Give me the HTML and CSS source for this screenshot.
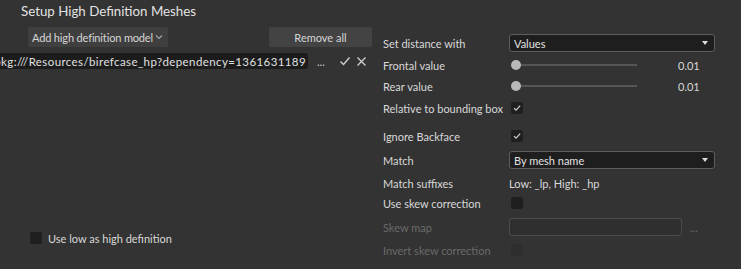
FILE: index.html
```html
<!DOCTYPE html>
<html lang="en">
<head>
    <meta charset="UTF-8">
    <meta name="viewport" content="width=device-width, initial-scale=1.0">
    <title>Setup High Definition Meshes</title>
    <link rel="stylesheet" href="styles.css">
</head>
<body>
    <div class="panel">
        <h1 class="title">Setup High Definition Meshes</h1>
        <div class="columns">
            <div class="left">
                <div class="toolbar">
                    <div class="combo">
                        <span>Add high definition model</span>
                        <svg class="chevron" width="8" height="6" viewBox="0 0 8 6"><path d="M1 1.5 L4 4.5 L7 1.5" fill="none" stroke="#a8a8a8" stroke-width="1.1"/></svg>
                    </div>
                    <button class="btn">Remove all</button>
                </div>
                <div class="path-row">
                    <div class="path"><span>pkg:///Resources/birefcase_hp?dependency=1361631189</span></div>
                    <span class="dots">...</span>
                    <svg class="icon" width="12" height="12" viewBox="0 0 12 12"><path d="M1.5 6.5 L4.5 9.5 L10.5 2.5" fill="none" stroke="#d0d0d0" stroke-width="1.4"/></svg>
                    <svg class="icon" width="11" height="11" viewBox="0 0 11 11"><path d="M1.5 1.5 L9.5 9.5 M9.5 1.5 L1.5 9.5" fill="none" stroke="#d0d0d0" stroke-width="1.3"/></svg>
                </div>
                <div class="check-line">
                    <span class="box"></span>
                    <span>Use low as high definition</span>
                </div>
            </div>

            <div class="right">
                <div class="row">
                    <span class="label">Set distance with</span>
                    <div class="select"><span>Values</span><span class="arrow"></span></div>
                </div>
                <div class="row">
                    <span class="label">Frontal value</span>
                    <div class="slider"><span class="knob"></span><span class="track"></span></div>
                    <span class="value">0.01</span>
                </div>
                <div class="row tight">
                    <span class="label">Rear value</span>
                    <div class="slider"><span class="knob"></span><span class="track"></span></div>
                    <span class="value">0.01</span>
                </div>
                <div class="row">
                    <span class="label">Relative to bounding box</span>
                    <span class="box checked"><svg width="12" height="12" viewBox="0 0 12 12"><path d="M3 6.2 L5 8.2 L9.2 3.6" fill="none" stroke="#cfcfcf" stroke-width="1.2"/></svg></span>
                </div>

                <div class="row section">
                    <span class="label">Ignore Backface</span>
                    <span class="box checked"><svg width="12" height="12" viewBox="0 0 12 12"><path d="M3 6.2 L5 8.2 L9.2 3.6" fill="none" stroke="#cfcfcf" stroke-width="1.2"/></svg></span>
                </div>
                <div class="row gap4">
                    <span class="label">Match</span>
                    <div class="select"><span>By mesh name</span><span class="arrow"></span></div>
                </div>
                <div class="row gap3">
                    <span class="label">Match suffixes</span>
                    <span class="plain">Low: _lp, High: _hp</span>
                </div>
                <div class="row gap0">
                    <span class="label">Use skew correction</span>
                    <span class="box"></span>
                </div>
                <div class="row gap4 disabled">
                    <span class="label">Skew map</span>
                    <div class="field"></div>
                    <span class="more">...</span>
                </div>
                <div class="row gap3 disabled">
                    <span class="label">Invert skew correction</span>
                    <span class="box faint"></span>
                </div>
            </div>
        </div>
    </div>
</body>
</html>
```

FILE: styles.css
```css
body {
    margin: 0;
    background: #333333;
    font-family: Lato, "Noto Sans", sans-serif;
    font-size: 11px;
    color: #d8d8d8;
    white-space: nowrap;
}
.panel {
    width: 741px;
    height: 269px;
    overflow: hidden;
}
.title {
    margin: 0;
    padding-left: 21px;
    height: 27px;
    line-height: 22px;
    font-size: 13.3px;
    font-weight: normal;
    color: #e2e2e2;
}
.columns {
    display: flex;
    gap: 11px;
}
.left {
    width: 372px;
    display: flex;
    flex-direction: column;
}
.toolbar {
    display: flex;
    justify-content: space-between;
    padding-left: 28px;
    height: 20px;
}
.combo {
    width: 140px;
    box-sizing: border-box;
    padding: 0 5px 0 4px;
    background: #3f3f3f;
    border-radius: 2px;
    display: flex;
    align-items: center;
    justify-content: space-between;
    color: #d6d6d6;
    letter-spacing: -0.15px;
}
.btn {
    width: 103px;
    height: 20px;
    border: none;
    border-radius: 2px;
    background: #434343;
    color: #d6d6d6;
    font-family: inherit;
    font-size: 11px;
    padding: 0;
}
.path-row {
    margin-top: 6px;
    height: 16px;
    display: flex;
    align-items: center;
}
.path {
    width: 308px;
    height: 16px;
    background: #1c1c1c;
    border-radius: 0 3px 3px 0;
    display: flex;
    justify-content: flex-end;
    align-items: center;
    overflow: hidden;
    color: #e0e0e0;
    font-size: 11.5px;
    letter-spacing: 0.4px;
}
.path span {
    flex-shrink: 0;
    padding-right: 2px;
}
.dots {
    margin-left: 9px;
    margin-right: 14px;
    color: #d0d0d0;
}
.icon {
    margin-right: 5px;
}
.check-line {
    margin-top: 162px;
    padding-left: 30px;
    display: flex;
    align-items: center;
    gap: 6px;
    height: 14px;
}
.box {
    width: 12px;
    height: 12px;
    background: #1f1f1f;
    border-radius: 2px;
    display: flex;
    align-items: center;
    justify-content: center;
}
.box.faint {
    background: #2e2e2e;
}
.right {
    flex: 1;
    padding-top: 6px;
}
.row {
    display: flex;
    align-items: center;
    height: 20px;
    margin-top: 2px;
}
.row:first-child {
    margin-top: 0;
}
.row.tight {
    margin-top: 1px;
}
.row.section {
    margin-top: 8px;
}
.row.gap4 {
    margin-top: 4px;
}
.row.gap3 {
    margin-top: 3px;
}
.row.gap0 {
    margin-top: 0;
}
.label {
    width: 126px;
    flex-shrink: 0;
}
.row .box {
    margin-left: 2px;
}
.select {
    width: 206px;
    height: 18px;
    box-sizing: border-box;
    border: 1px solid #5e5e5e;
    border-radius: 3px;
    background: #1e1e1e;
    display: flex;
    align-items: center;
    justify-content: space-between;
    padding: 0 6px 0 4px;
    color: #e0e0e0;
}
.arrow {
    width: 0;
    height: 0;
    border-left: 3px solid transparent;
    border-right: 3px solid transparent;
    border-top: 4px solid #dcdcdc;
}
.slider {
    position: relative;
    width: 130px;
    height: 12px;
    display: flex;
    align-items: center;
}
.knob {
    position: absolute;
    left: 2px;
    top: 1px;
    width: 10px;
    height: 10px;
    border-radius: 50%;
    background: #b9b9b9;
}
.track {
    margin-left: 10px;
    width: 118px;
    height: 2px;
    background: #565656;
}
.value {
    margin-left: 39px;
}
.plain {
    color: #d8d8d8;
}
.disabled {
    color: #6a6a6a;
}
.field {
    width: 173px;
    height: 18px;
    box-sizing: border-box;
    border: 1px solid #4c4c4c;
    border-radius: 3px;
    background: #2f2f2f;
}
.more {
    margin-left: 8px;
    color: #666666;
}
```
